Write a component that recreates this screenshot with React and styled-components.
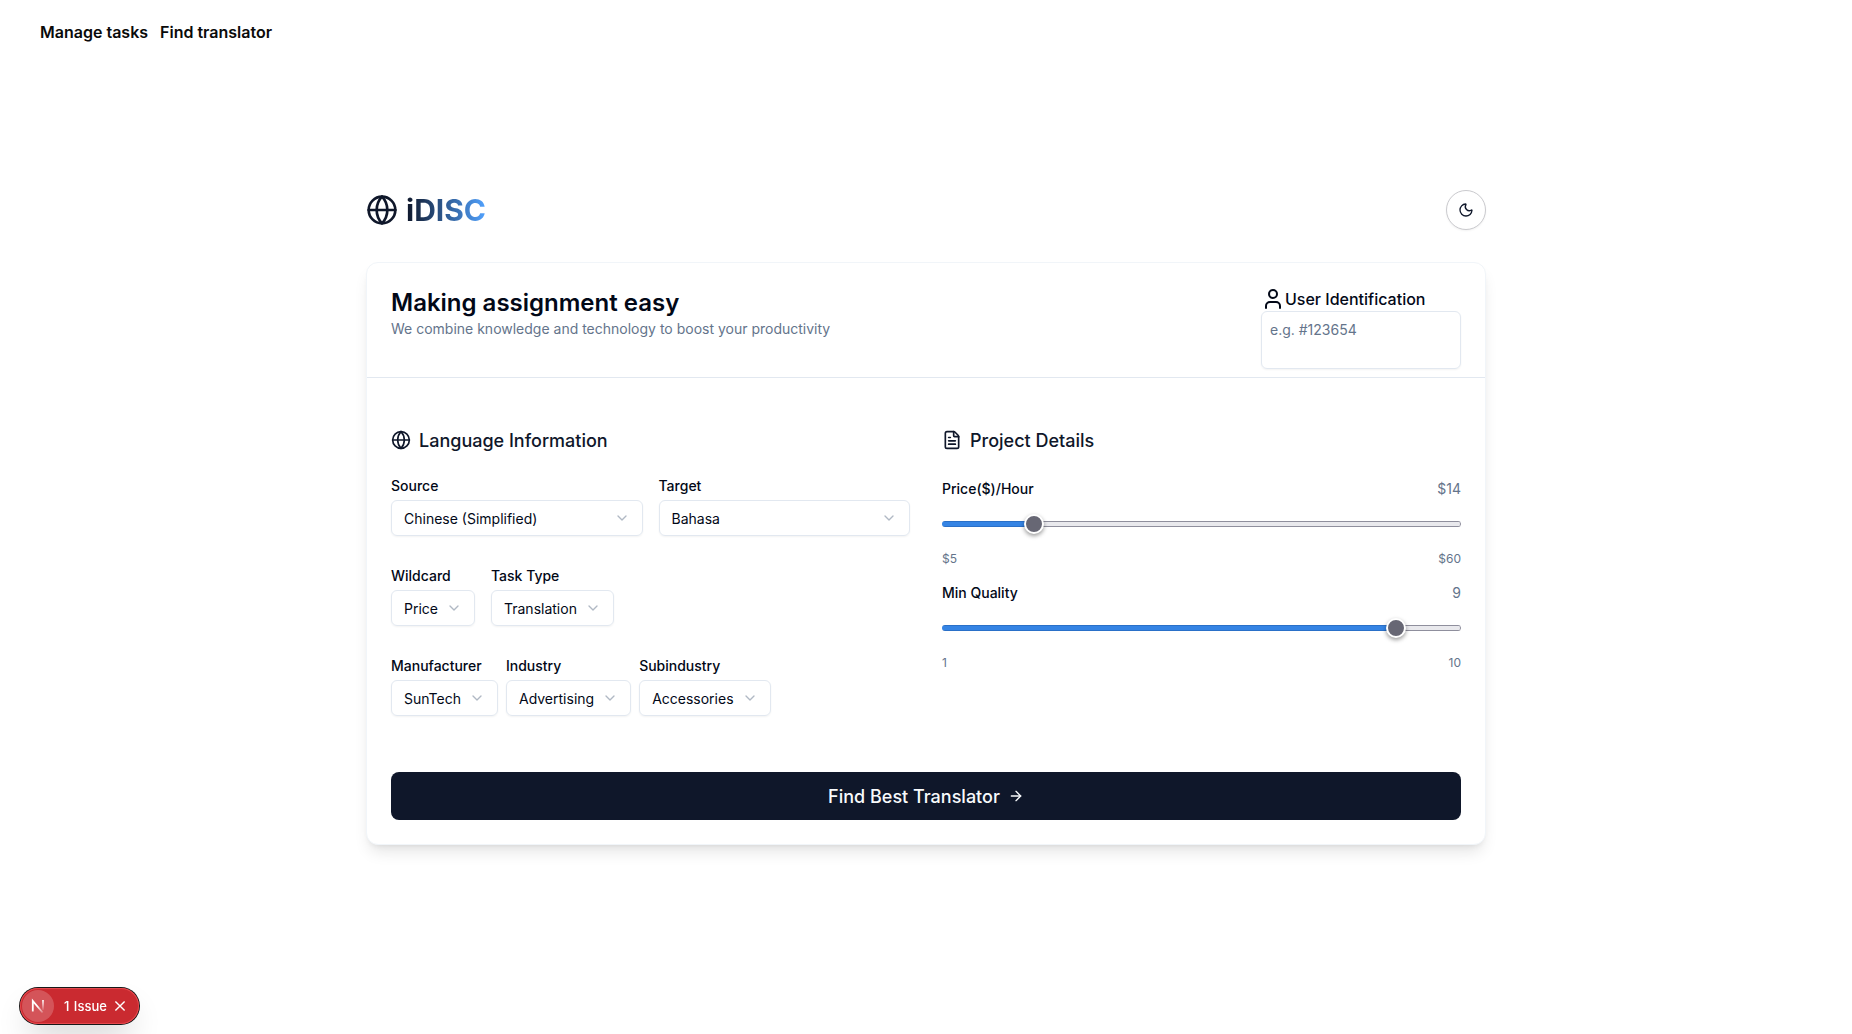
import React, { useState } from "react";
import styled, { createGlobalStyle } from "styled-components";
import { Globe, Moon, User, FileText, ChevronDown, ArrowRight } from "lucide-react";

const GlobalStyle = createGlobalStyle`
  *, *::before, *::after { box-sizing: border-box; }
  body {
    margin: 0;
    background: #fff;
    color: #020817;
    font-family: Inter, "Liberation Sans", sans-serif;
    font-size: 16px;
    line-height: 24px;
  }
  h1, h2, h3, p { margin: 0; }
`;

const Page = styled.div`
  min-height: 1034px;
  display: flex;
  flex-direction: column;
`;

const Nav = styled.nav`
  display: flex;
  gap: 12px;
  padding: 20px 40px;
`;

const NavLink = styled.a`
  font-weight: 600;
  color: #0a0a0a;
`;

const Main = styled.main`
  width: 1120px;
  margin: 126px auto 0;
`;

const TopBar = styled.header`
  display: flex;
  align-items: center;
  justify-content: space-between;
  margin-bottom: 32px;
`;

const Brand = styled.div`
  display: flex;
  align-items: center;
  gap: 8px;
  color: #0f172a;
`;

const BrandName = styled.h1`
  font-size: 30px;
  line-height: 36px;
  font-weight: 700;
  color: transparent;
  background: linear-gradient(to right, #0f172a, #51a2ff);
  background-clip: text;
  -webkit-background-clip: text;
`;

const ThemeButton = styled.button`
  display: flex;
  align-items: center;
  justify-content: center;
  width: 40px;
  height: 40px;
  padding: 0;
  border: 1px solid #cacace;
  border-radius: 50%;
  background: #fff;
  color: #0f172a;
  box-shadow: 0 1px 2px rgba(0, 0, 0, 0.05);
`;

const Card = styled.section`
  border: 1px solid #f1f5f9;
  border-radius: 12px;
  background: #fff;
  box-shadow: 0 10px 15px -3px rgba(0, 0, 0, 0.1), 0 4px 6px -4px rgba(0, 0, 0, 0.1);
`;

const CardHeader = styled.div`
  display: flex;
  justify-content: space-between;
  padding: 24px 24px 8px;
  border-bottom: 1px solid #e2e8f0;
`;

const Title = styled.h2`
  font-size: 24px;
  line-height: 32px;
  font-weight: 600;
`;

const Subtitle = styled.p`
  font-size: 14px;
  line-height: 20px;
  color: #64748b;
`;

const Identity = styled.div`
  width: 200px;
`;

const IdentityLabel = styled.label`
  display: flex;
  align-items: center;
  font-weight: 500;
`;

const IdentityInput = styled.textarea`
  display: block;
  width: 100%;
  height: 58px;
  padding: 8px;
  border: 1px solid #e2e8f0;
  border-radius: 6px;
  background: transparent;
  font: 14px/20px Inter, "Liberation Sans", sans-serif;
  resize: none;
  box-shadow: 0 1px 2px rgba(0, 0, 0, 0.05);
  &::placeholder { color: #64748b; opacity: 1; }
`;

const CardBody = styled.div`
  padding: 48px 24px 24px;
`;

const Columns = styled.div`
  display: grid;
  grid-template-columns: 1fr 1fr;
  gap: 32px;
  margin-bottom: 56px;
`;

const Caption = styled.span`
  padding-top: 2px;
`;

const SectionTitle = styled.h3`
  display: flex;
  align-items: center;
  gap: 8px;
  height: 28px;
  margin-bottom: 24px;
  font-size: 18px;
  line-height: 26px;
  font-weight: 500;
  color: #0f172a;
`;

const Rows = styled.div`
  display: flex;
  flex-direction: column;
  gap: 32px;
`;

const Row = styled.div`
  display: flex;
  gap: ${(p) => p.$gap}px;
`;

const FieldBox = styled.div`
  display: flex;
  flex-direction: column;
  gap: 6px;
  flex: ${(p) => (p.$grow ? "1 1 0" : "0 0 auto")};
`;

const Label = styled.label`
  font-size: 14px;
  line-height: 16px;
  font-weight: 500;
`;

const Select = styled.button`
  display: flex;
  align-items: center;
  justify-content: space-between;
  gap: 8px;
  width: 100%;
  height: 36px;
  padding: 0 12px;
  border: 1px solid #e2e8f0;
  border-radius: 6px;
  background: transparent;
  color: #020817;
  font: 14px/20px Inter, "Liberation Sans", sans-serif;
  box-shadow: 0 1px 2px rgba(0, 0, 0, 0.05);
  svg { color: #64748b; opacity: 0.5; }
`;

const SliderBox = styled.div`
  padding-top: ${(p) => p.$top}px;
`;

const SliderLine = styled.div`
  display: flex;
  align-items: center;
  justify-content: space-between;
  height: 20px;
  font-size: 14px;
  line-height: 18px;
  color: #64748b;
`;

const SliderName = styled(Caption)`
  font-weight: 500;
  color: #020817;
`;

const SliderLimits = styled(SliderLine)`
  font-size: 12px;
`;

const Range = styled.input`
  appearance: none;
  display: block;
  width: 100%;
  height: 20px;
  margin: 16px 0 15px;
  background: transparent;
  &::-webkit-slider-runnable-track {
    height: 6px;
    border-radius: 3px;
    box-shadow: inset -1px 0 0 #8f8f9d;
    background:
      linear-gradient(to bottom, #2a70c8 1px, #3584e4 1px, #3584e4 5px, #2a70c8 5px) 0 0 / ${(p) => p.$fill}% 100% no-repeat,
      linear-gradient(to bottom, #8f8f9d 1px, #e9e9ed 1px, #e9e9ed 5px, #8f8f9d 5px);
  }
  &::-webkit-slider-thumb {
    appearance: none;
    width: 20px;
    height: 20px;
    margin-top: -7px;
    border: 2px solid #fff;
    border-radius: 50%;
    background: #676774;
    box-shadow: 0 2px 4px rgba(0, 0, 0, 0.4);
  }
`;

const Submit = styled.button`
  display: flex;
  align-items: center;
  justify-content: center;
  gap: 8px;
  width: 100%;
  height: 48px;
  border: 0;
  border-radius: 8px;
  background: #0f172a;
  color: #f8fafc;
  font: 500 18px/28px Inter, "Liberation Sans", sans-serif;
`;

const IssueBadge = styled.div`
  position: fixed;
  left: 20px;
  bottom: 10px;
  display: flex;
  align-items: center;
  height: 36px;
  width: 119px;
  padding: 0 13px 0 2px;
  border-radius: 18px;
  background: #ca2a30;
  color: #fff;
  box-shadow: 0 0 0 1px #171717, inset 0 0 0 1px #e5484d, 0 16px 32px -8px rgba(0, 0, 0, 0.24);
`;

const IssueLogo = styled.span`
  display: flex;
  width: 32px;
  height: 32px;
  border-radius: 50%;
  background: rgba(255, 255, 255, 0.2);
`;

const IssueText = styled.span`
  margin: 0 7px 0 10px;
  font-size: 13px;
  font-weight: 500;
  word-spacing: 1px;
  white-space: nowrap;
`;

function Field({ label, value, grow }) {
  return (
    <FieldBox $grow={grow}>
      <Label>{label}</Label>
      <Select type="button">
        <Caption>{value}</Caption>
        <ChevronDown size={16} />
      </Select>
    </FieldBox>
  );
}

function Slider({ label, prefix = "", min, max, initial, top }) {
  const [value, setValue] = useState(initial);
  return (
    <SliderBox $top={top}>
      <SliderLine>
        <SliderName>{label}</SliderName>
        <Caption>{prefix}{value}</Caption>
      </SliderLine>
      <Range
        type="range"
        min={min}
        max={max}
        value={value}
        $fill={((value - min) / (max - min)) * 100}
        onChange={(e) => setValue(Number(e.target.value))}
      />
      <SliderLimits>
        <span>{prefix}{min}</span>
        <span>{prefix}{max}</span>
      </SliderLimits>
    </SliderBox>
  );
}

function NextMark() {
  return (
    <svg width="32" height="32" viewBox="0 0 32 32" fill="none">
      <defs>
        <linearGradient id="diag" x1="16" y1="16" x2="21" y2="23" gradientUnits="userSpaceOnUse">
          <stop stopColor="#fff" />
          <stop offset="1" stopColor="#fff" stopOpacity="0.2" />
        </linearGradient>
        <linearGradient id="stem" x1="21" y1="10" x2="21" y2="20" gradientUnits="userSpaceOnUse">
          <stop stopColor="#fff" />
          <stop offset="1" stopColor="#fff" stopOpacity="0.1" />
        </linearGradient>
      </defs>
      <path d="M10.8 21.5V10.9L20.6 22.5" stroke="url(#diag)" strokeWidth="1.8" />
      <path d="M21 10v10" stroke="url(#stem)" strokeWidth="1.7" />
    </svg>
  );
}

export default function App() {
  return (
    <Page>
      <GlobalStyle />
      <Nav>
        <NavLink>Manage tasks</NavLink>
        <NavLink>Find translator</NavLink>
      </Nav>
      <Main>
        <TopBar>
          <Brand>
            <Globe size={32} />
            <BrandName>iDISC</BrandName>
          </Brand>
          <ThemeButton aria-label="Toggle theme"><Moon size={16} /></ThemeButton>
        </TopBar>
        <Card>
          <CardHeader>
            <div>
              <Title>Making assignment easy</Title>
              <Subtitle>We combine knowledge and technology to boost your productivity</Subtitle>
            </div>
            <Identity>
              <IdentityLabel><User size={24} />User Identification</IdentityLabel>
              <IdentityInput placeholder="e.g. #123654" />
            </Identity>
          </CardHeader>
          <CardBody>
            <Columns>
              <div>
                <SectionTitle><Globe size={20} /><Caption>Language Information</Caption></SectionTitle>
                <Rows>
                  <Row $gap={16}>
                    <Field label="Source" value="Chinese (Simplified)" grow />
                    <Field label="Target" value="Bahasa" grow />
                  </Row>
                  <Row $gap={16}>
                    <Field label="Wildcard" value="Price" />
                    <Field label="Task Type" value="Translation" />
                  </Row>
                  <Row $gap={8}>
                    <Field label="Manufacturer" value="SunTech" />
                    <Field label="Industry" value="Advertising" />
                    <Field label="Subindustry" value="Accessories" />
                  </Row>
                </Rows>
              </div>
              <div>
                <SectionTitle><FileText size={20} /><Caption>Project Details</Caption></SectionTitle>
                <Slider label="Price($)/Hour" prefix="$" min={5} max={60} initial={14} top={0} />
                <Slider label="Min Quality" min={1} max={10} initial={9} top={13} />
              </div>
            </Columns>
            <Submit type="button"><Caption>Find Best Translator</Caption><ArrowRight size={16} /></Submit>
          </CardBody>
        </Card>
      </Main>
      <IssueBadge>
        <IssueLogo><NextMark /></IssueLogo>
        <IssueText>1 Issue</IssueText>
        <svg width="12" height="12" viewBox="0 0 12 12" fill="none" stroke="#fff" strokeWidth="1.4">
          <path d="M1.4 1.4l9.2 9.2M10.6 1.4l-9.2 9.2" />
        </svg>
      </IssueBadge>
    </Page>
  );
}
